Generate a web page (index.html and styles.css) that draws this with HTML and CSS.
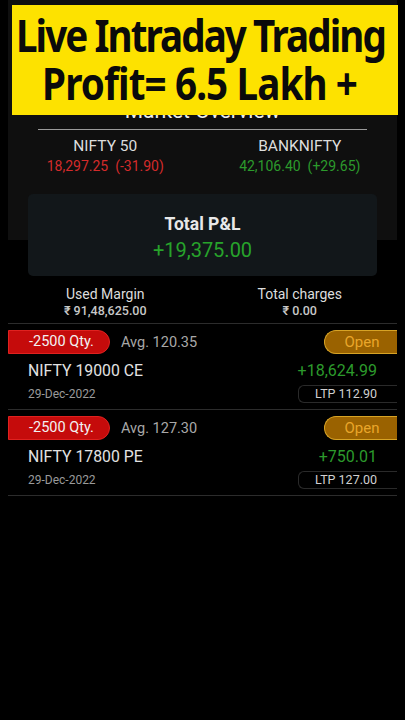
FILE: index.html
```html
<!DOCTYPE html>
<html>
<head>
<meta charset="utf-8">
<link rel="stylesheet" href="styles.css">
</head>
<body>
<div class="screen">
  <div class="top">
    <div class="overview">
      <div class="ov-title">Market Overview</div>
      <div class="ov-rule"></div>
      <div class="indices">
        <div class="index">
          <div class="idx-name">NIFTY 50</div>
          <div class="idx-val red">18,297.25&nbsp;&nbsp;(-31.90)</div>
        </div>
        <div class="index">
          <div class="idx-name">BANKNIFTY</div>
          <div class="idx-val green">42,106.40&nbsp;&nbsp;(+29.65)</div>
        </div>
      </div>
    </div>
    <div class="pnl-card">
      <div class="pnl-label">Total P&amp;L</div>
      <div class="pnl-value">+19,375.00</div>
    </div>
  </div>
  <div class="summary">
    <div class="sum-col">
      <div class="sum-label">Used Margin</div>
      <div class="sum-val">₹ 91,48,625.00</div>
    </div>
    <div class="sum-col">
      <div class="sum-label">Total charges</div>
      <div class="sum-val">₹ 0.00</div>
    </div>
  </div>
  <div class="positions">
    <div class="pos">
      <div class="pos-row1">
        <span class="qty">-2500 Qty.</span>
        <span class="avg">Avg. 120.35</span>
        <span class="status">Open</span>
      </div>
      <div class="pos-row2">
        <span class="sym">NIFTY 19000 CE</span>
        <span class="pl">+18,624.99</span>
      </div>
      <div class="pos-row3">
        <span class="date">29-Dec-2022</span>
        <span class="ltp">LTP 112.90</span>
      </div>
    </div>
    <div class="pos">
      <div class="pos-row1">
        <span class="qty">-2500 Qty.</span>
        <span class="avg">Avg. 127.30</span>
        <span class="status">Open</span>
      </div>
      <div class="pos-row2">
        <span class="sym">NIFTY 17800 PE</span>
        <span class="pl">+750.01</span>
      </div>
      <div class="pos-row3">
        <span class="date">29-Dec-2022</span>
        <span class="ltp">LTP 127.00</span>
      </div>
    </div>
  </div>
  <div class="banner">
    <div class="banner-line line-one">Live Intraday Trading</div>
    <div class="banner-line">Profit= 6.5 Lakh +</div>
  </div>
</div>
</body>
</html>
```
FILE: styles.css
```css
* { box-sizing: border-box; }
html, body { margin: 0; padding: 0; background: #000; }
body { font-family: Roboto, "Liberation Sans", sans-serif; color: #ddd; }
.screen { position: relative; width: 405px; height: 720px; overflow: hidden; background: #000; }

.top {
  margin: 0 8px;
  background: linear-gradient(#0f0f0f 240px, #000 240px);
  padding: 0 20px;
}
.overview { padding-top: 99px; }
.ov-title { text-align: center; font-size: 21px; line-height: 24px; color: #eee; }
.ov-rule { height: 1px; background: #9a9a9a; margin: 6px 10px 0; }
.indices { display: grid; grid-template-columns: 1fr 1fr; margin: 7px -20px 0; }
.index { text-align: center; }
.idx-name { font-size: 15.5px; line-height: 19px; color: #ddd; }
.idx-val { font-size: 14px; line-height: 18px; margin-top: 1px; }
.red { color: #d42b2b; }
.green { color: #2c9a2c; }

.pnl-card {
  margin-top: 19px;
  height: 82px;
  background: #12171a;
  border-radius: 5px;
  display: flex; flex-direction: column; align-items: center;
  padding-top: 19px;
}
.pnl-label { font-size: 17.5px; font-weight: 700; line-height: 22px; color: #e8e8e8; }
.pnl-value { font-size: 20px; line-height: 26px; color: #27a32b; margin-top: 2px; }

.summary {
  display: grid; grid-template-columns: 1fr 1fr;
  margin: 10px 8px 0; padding-bottom: 4px;
  border-bottom: 1px solid #2c2c2c;
}
.sum-col { text-align: center; }
.sum-label { font-size: 14px; line-height: 17px; color: #ddd; }
.sum-val { font-size: 12.5px; line-height: 16px; color: #c8c8c8; font-weight: 500; }

.positions { margin: 0 8px; }
.pos { border-bottom: 1px solid #2c2c2c; padding: 6px 0 6px; }
.pos-row1 { display: flex; align-items: center; height: 24px; }
.qty {
  width: 102px; height: 24px;
  background: #c50b0b; border: 1px solid #e0211f;
  border-radius: 0 12px 12px 0;
  color: #f2f2f2; font-size: 14.5px; line-height: 22px;
  padding-left: 20px;
}
.avg { margin-left: 11px; font-size: 14.5px; color: #a8a8a8; }
.status {
  margin-left: auto; width: 73px; height: 24px;
  background: #9a6200; border: 1px solid #d7a325; border-right: none;
  border-radius: 12px 0 0 12px;
  color: #e9a62a; font-size: 15px; line-height: 22px; text-align: center; padding-left: 2px;
}
.pos-row2 { display: flex; justify-content: space-between; align-items: center; padding: 0 20px 0 20px; margin-top: 5px; height: 22px; }
.sym { font-size: 15.8px; color: #e2e2e2; }
.pl { font-size: 16px; color: #2c9a2c; }
.pos-row3 { display: flex; justify-content: space-between; align-items: center; margin-top: 4px; padding-left: 20px; }
.date { font-size: 12px; color: #9a9a9a; }
.ltp {
  width: 99px; height: 18px;
  border: 1px solid #2a2a2a; border-right: none; border-radius: 6px 0 0 6px;
  font-size: 12.5px; line-height: 16px; color: #d0d0d0; text-align: right; padding-right: 20px;
}

.banner {
  position: absolute; left: 12px; top: 5px; width: 386px; height: 110px;
  background: #fde200;
  display: flex; flex-direction: column; align-items: center; justify-content: center;
  padding-right: 10px;
  overflow: hidden;
}
.banner-line {
  font-family: "Noto Sans", "Open Sans", sans-serif; font-weight: 700;
  font-size: 44px; line-height: 48px; color: #0a0a0a; white-space: nowrap;
  letter-spacing: -1px;
  transform: scaleX(0.877);
}
.line-one { letter-spacing: -2.2px; margin-top: -2px; }
```
